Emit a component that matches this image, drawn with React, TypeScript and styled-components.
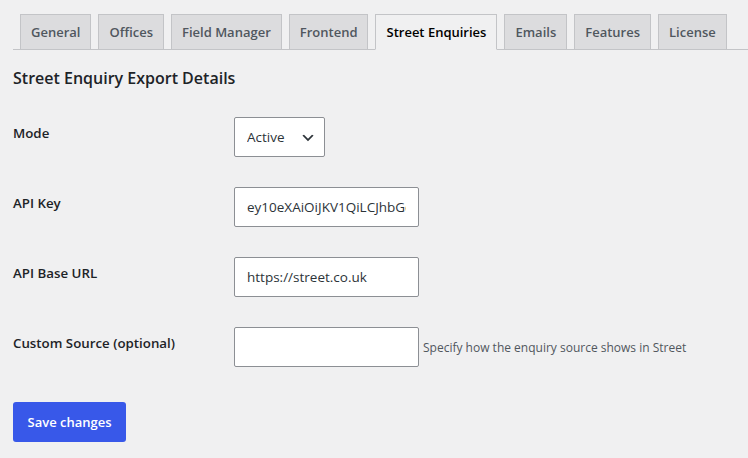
import React, { useState } from 'react';
import styled, { createGlobalStyle } from 'styled-components';

const GlobalStyle = createGlobalStyle`
  html, body {
    margin: 0;
    padding: 0;
    background: #f0f0f1;
  }
  body {
    font-family: 'Open Sans', 'Noto Sans', sans-serif;
    color: #1d2327;
  }
`;

const Wrap = styled.div`
  padding: 0 0 0 13px;
`;

const TabBar = styled.nav`
  display: flex;
  align-items: flex-end;
  padding-top: 14px;
  border-bottom: 1px solid #c3c4c7;
`;

const Tab = styled.a<{ $active?: boolean }>`
  display: block;
  margin-left: 7px;
  margin-bottom: ${(p) => (p.$active ? '-1px' : '0')};
  padding: 5px 10px;
  line-height: 24px;
  font-size: 13px;
  font-weight: 600;
  text-decoration: none;
  white-space: nowrap;
  color: ${(p) => (p.$active ? '#000' : '#50575e')};
  background: ${(p) => (p.$active ? '#f0f0f1' : '#dcdcde')};
  border: 1px solid #c3c4c7;
  border-bottom: ${(p) => (p.$active ? '1px solid #f0f0f1' : 'none')};
  cursor: pointer;
`;

const Title = styled.h2`
  margin: 17px 0 13px;
  font-size: 16px;
  line-height: 22px;
  font-weight: 600;
  color: #1d2327;
`;

const Table = styled.div`
  display: flex;
  flex-direction: column;
`;

const Row = styled.div`
  display: flex;
`;

const Label = styled.label`
  width: 200px;
  flex: none;
  padding: 22px 10px 18px 0;
  font-size: 13.3px;
  line-height: 18px;
  font-weight: 600;
  color: #1d2327;
`;

const Field = styled.div`
  display: flex;
  align-items: center;
  padding: 15px 10px 15px 11px;
`;

const TextInput = styled.input`
  box-sizing: border-box;
  width: 185px;
  height: 40px;
  margin: 0;
  padding: 0 12px;
  border: 1px solid #8c8f94;
  border-radius: 2px;
  background: #fff;
  font-family: inherit;
  font-size: 13.5px;
  color: #2c3338;
  outline: none;
`;

const SelectBox = styled.div`
  position: relative;
  width: 91px;
  height: 40px;
`;

const Select = styled.select`
  box-sizing: border-box;
  appearance: none;
  width: 100%;
  height: 100%;
  margin: 0;
  padding: 0 24px 0 12px;
  border: 1px solid #8c8f94;
  border-radius: 2px;
  background: #fff;
  font-family: inherit;
  font-size: 13.5px;
  color: #2c3338;
  outline: none;
`;

const Chevron = styled.svg`
  position: absolute;
  right: 9px;
  top: 13px;
  width: 16px;
  height: 16px;
  pointer-events: none;
`;

const Help = styled.span`
  margin-left: 4px;
  font-size: 12px;
  color: #50575e;
  white-space: nowrap;
`;

const Submit = styled.div`
  padding: 20px 0;
`;

const Button = styled.button`
  box-sizing: border-box;
  height: 40px;
  padding: 0 14.5px;
  border: 0;
  border-radius: 3px;
  background: #3858e9;
  color: #fff;
  font-family: inherit;
  font-size: 13px;
  font-weight: 600;
  cursor: pointer;
`;

const tabs = [
  'General',
  'Offices',
  'Field Manager',
  'Frontend',
  'Street Enquiries',
  'Emails',
  'Features',
  'License',
];

export default function App() {
  const [active, setActive] = useState('Street Enquiries');
  const [mode, setMode] = useState('active');
  const [apiKey, setApiKey] = useState('ey10eXAiOiJKV1QiLCJhbGciOiJIUzI1NiJ9');
  const [baseUrl, setBaseUrl] = useState('https://street.co.uk');
  const [source, setSource] = useState('');

  return (
    <Wrap>
      <GlobalStyle />
      <TabBar>
        {tabs.map((t) => (
          <Tab key={t} $active={t === active} onClick={() => setActive(t)}>
            {t}
          </Tab>
        ))}
      </TabBar>
      <Title>Street Enquiry Export Details</Title>
      <Table>
        <Row>
          <Label>Mode</Label>
          <Field>
            <SelectBox>
              <Select value={mode} onChange={(e) => setMode(e.target.value)}>
                <option value='active'>Active</option>
                <option value='inactive'>Inactive</option>
              </Select>
              <Chevron viewBox='0 0 20 20'>
                <path d='M5 6l5 5 5-5 2 1-7 7-7-7 2-1z' fill='#2c3338' />
              </Chevron>
            </SelectBox>
          </Field>
        </Row>
        <Row>
          <Label>API Key</Label>
          <Field>
            <TextInput value={apiKey} onChange={(e) => setApiKey(e.target.value)} />
          </Field>
        </Row>
        <Row>
          <Label>API Base URL</Label>
          <Field>
            <TextInput value={baseUrl} onChange={(e) => setBaseUrl(e.target.value)} />
          </Field>
        </Row>
        <Row>
          <Label>Custom Source (optional)</Label>
          <Field>
            <TextInput value={source} onChange={(e) => setSource(e.target.value)} />
            <Help>Specify how the enquiry source shows in Street</Help>
          </Field>
        </Row>
      </Table>
      <Submit>
        <Button type='button'>Save changes</Button>
      </Submit>
    </Wrap>
  );
}
